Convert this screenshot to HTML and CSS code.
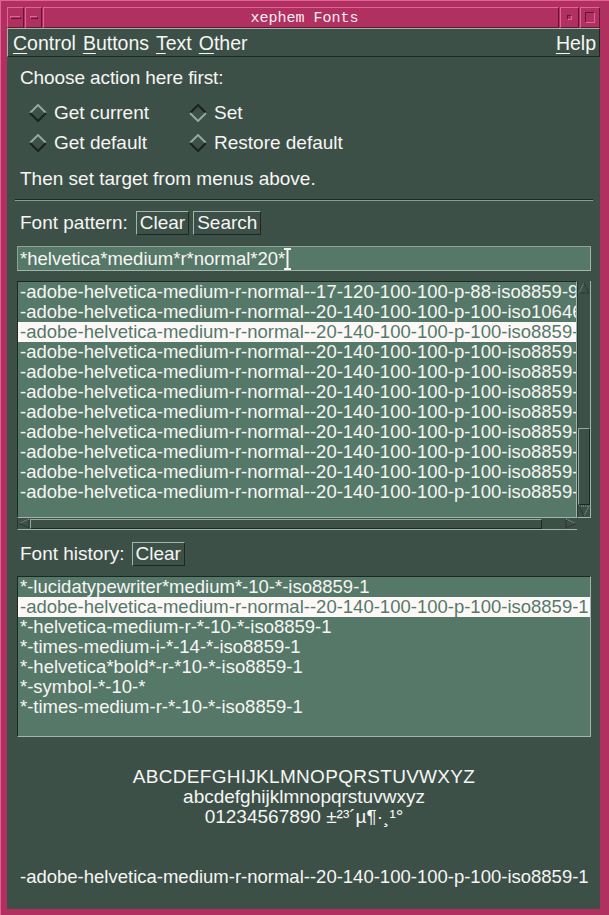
FILE: index.html
```html
<!DOCTYPE html>
<html>
<head>
<meta charset="utf-8">
<title>xephem Fonts</title>
<link rel="stylesheet" href="styles.css">
</head>
<body>
<div class="window">
  <div class="titlebar">
    <div class="tbtn tb1"><span class="bar wide"></span></div>
    <div class="tbtn tb2"><span class="bar narrow"></span></div>
    <div class="title">xephem Fonts</div>
    <div class="tbtn tb3"><span class="sq small"></span></div>
    <div class="tbtn tb4"><span class="sq big"></span></div>
  </div>
  <div class="content">
    <div class="menubar">
      <div class="menu-items">
        <span><u>C</u>ontrol</span>
        <span><u>B</u>uttons</span>
        <span><u>T</u>ext</span>
        <span><u>O</u>ther</span>
      </div>
      <span class="help"><u>H</u>elp</span>
    </div>
    <div class="body">
      <div class="label first">Choose action here first:</div>
      <div class="radios">
        <div class="radio"><svg width="18" height="18" viewBox="0 0 18 18"><path d="M1 9 L9 1 L17 9" class="lt"/><path d="M1 9 L9 17 L17 9" class="dk"/></svg><span>Get current</span></div>
        <div class="radio"><svg width="18" height="18" viewBox="0 0 18 18"><path d="M1 9 L9 1 L17 9" class="dk"/><path d="M1 9 L9 17 L17 9" class="lt"/></svg><span>Set</span></div>
        <div class="radio"><svg width="18" height="18" viewBox="0 0 18 18"><path d="M1 9 L9 1 L17 9" class="lt"/><path d="M1 9 L9 17 L17 9" class="dk"/></svg><span>Get default</span></div>
        <div class="radio"><svg width="18" height="18" viewBox="0 0 18 18"><path d="M1 9 L9 1 L17 9" class="lt"/><path d="M1 9 L9 17 L17 9" class="dk"/></svg><span>Restore default</span></div>
      </div>
      <div class="label then">Then set target from menus above.</div>
      <div class="sep"></div>
      <div class="row pattern-row">
        <span class="row-label">Font pattern:</span>
        <span class="btn">Clear</span>
        <span class="btn">Search</span>
      </div>
      <div class="field">*helvetica*medium*r*normal*20*<svg class="ibeam" width="7" height="22" viewBox="0 0 7 22"><path d="M0 1 H7 M3.5 1 V21 M0 21 H7"/></svg></div>
      <div class="listwrap">
        <div class="list">
          <div class="item">-adobe-helvetica-medium-r-normal--17-120-100-100-p-88-iso8859-9</div>
          <div class="item">-adobe-helvetica-medium-r-normal--20-140-100-100-p-100-iso10646-1</div>
          <div class="item sel">-adobe-helvetica-medium-r-normal--20-140-100-100-p-100-iso8859-1</div>
          <div class="item">-adobe-helvetica-medium-r-normal--20-140-100-100-p-100-iso8859-10</div>
          <div class="item">-adobe-helvetica-medium-r-normal--20-140-100-100-p-100-iso8859-13</div>
          <div class="item">-adobe-helvetica-medium-r-normal--20-140-100-100-p-100-iso8859-14</div>
          <div class="item">-adobe-helvetica-medium-r-normal--20-140-100-100-p-100-iso8859-15</div>
          <div class="item">-adobe-helvetica-medium-r-normal--20-140-100-100-p-100-iso8859-2</div>
          <div class="item">-adobe-helvetica-medium-r-normal--20-140-100-100-p-100-iso8859-3</div>
          <div class="item">-adobe-helvetica-medium-r-normal--20-140-100-100-p-100-iso8859-4</div>
          <div class="item">-adobe-helvetica-medium-r-normal--20-140-100-100-p-100-iso8859-9</div>
        </div>
        <div class="vscroll">
          <svg class="arrow" width="12" height="12" viewBox="0 0 12 12"><path d="M1 11 L6 1" class="alt"/><path d="M6 1 L11 11 L1 11" class="adk"/></svg>
          <div class="vtrack"><div class="vthumb"></div></div>
          <svg class="arrow" width="12" height="12" viewBox="0 0 12 12"><path d="M1 1 L11 1 L6 11" class="alt"/><path d="M6 11 L1 1" class="adk"/></svg>
        </div>
        <div class="hscroll">
          <svg class="harrow" width="12" height="11" viewBox="0 0 12 11"><path d="M11 1 L1 5.5" class="alt"/><path d="M1 5.5 L11 10 L11 1" class="adk"/></svg>
          <div class="hthumb"></div>
          <div class="htrack"></div>
          <svg class="harrow" width="12" height="11" viewBox="0 0 12 11"><path d="M1 1 L11 5.5" class="alt"/><path d="M11 5.5 L1 10 L1 1" class="adk"/></svg>
        </div>
        <div class="corner"></div>
      </div>
      <div class="row history-row">
        <span class="row-label">Font history:</span>
        <span class="btn">Clear</span>
      </div>
      <div class="list history">
        <div class="item">*-lucidatypewriter*medium*-10-*-iso8859-1</div>
        <div class="item sel">-adobe-helvetica-medium-r-normal--20-140-100-100-p-100-iso8859-1</div>
        <div class="item">*-helvetica-medium-r-*-10-*-iso8859-1</div>
        <div class="item">*-times-medium-i-*-14-*-iso8859-1</div>
        <div class="item">*-helvetica*bold*-r-*10-*-iso8859-1</div>
        <div class="item">*-symbol-*-10-*</div>
        <div class="item">*-times-medium-r-*-10-*-iso8859-1</div>
      </div>
      <div class="sample">
        <div class="caps">ABCDEFGHIJKLMNOPQRSTUVWXYZ</div>
        <div>abcdefghijklmnopqrstuvwxyz</div>
        <div>01234567890 ±²³´µ¶·¸¹°</div>
      </div>
      <div class="current">-adobe-helvetica-medium-r-normal--20-140-100-100-p-100-iso8859-1</div>
    </div>
  </div>
</div>
</body>
</html>
```

FILE: styles.css
```css
html, body {
  margin: 0;
  padding: 0;
  background: #b03060;
}
body {
  font-family: "Liberation Sans", Arial, sans-serif;
  color: #f6f6f4;
}
.window {
  width: 609px;
  height: 915px;
  box-sizing: border-box;
  background: #b03060;
  border-top: 1px solid #e8609a;
  border-left: 1px solid #e8609a;
  padding: 6px 9px 6px 6px;
  display: flex;
  flex-direction: column;
}
.titlebar {
  height: 21px;
  display: flex;
  gap: 1px;
}
.tbtn {
  box-sizing: border-box;
  height: 21px;
  border-top: 1px solid #e8609a;
  border-left: 1px solid #e8609a;
  border-bottom: 1px solid #5e1832;
  border-right: 1px solid #5e1832;
  display: flex;
  align-items: center;
  justify-content: center;
}
.tb1 { width: 17px; }
.tb2 { width: 17px; }
.tb3 { width: 19px; }
.tb4 { width: 20px; }
.title {
  flex: 1;
  box-sizing: border-box;
  height: 21px;
  border-top: 1px solid #e8609a;
  border-left: 1px solid #e8609a;
  border-bottom: 1px solid #5e1832;
  border-right: 1px solid #5e1832;
  font-family: "Liberation Mono", "DejaVu Sans Mono", monospace;
  font-size: 15px;
  line-height: 21px;
  text-align: center;
  color: #fbeef3;
  padding-left: 7px;
}
.bar {
  display: block;
  height: 3px;
  box-sizing: border-box;
  border-top: 1px solid #e8609a;
  border-left: 1px solid #e8609a;
  border-bottom: 1px solid #5e1832;
  border-right: 1px solid #5e1832;
}
.bar.wide { width: 11px; }
.bar.narrow { width: 8px; }
.sq {
  display: block;
  box-sizing: border-box;
  border-top: 1px solid #5e1832;
  border-left: 1px solid #5e1832;
  border-bottom: 1px solid #e8609a;
  border-right: 1px solid #e8609a;
}
.sq.small { width: 5px; height: 5px; }
.sq.big { width: 10px; height: 11px; }

.content {
  flex: 1;
  background: #3d5048;
  display: flex;
  flex-direction: column;
}
.menubar {
  height: 29px;
  box-sizing: border-box;
  border-top: 1px solid #a4b4ac;
  border-left: 1px solid #a4b4ac;
  border-bottom: 1px solid #1c2824;
  border-right: 1px solid #1c2824;
  display: flex;
  align-items: center;
  padding: 2px 3px 0 5px;
  font-size: 19.5px;
}
.menu-items {
  display: flex;
  gap: 7px;
}
.help { margin-left: auto; }
u {
  text-decoration: underline;
  text-decoration-thickness: 1px;
  text-underline-offset: 3px;
}
.body {
  padding: 0 9px 0 10px;
  display: flex;
  flex-direction: column;
  font-size: 19px;
}
.label {
  line-height: 22px;
  padding-left: 3px;
}
.label.first { margin-top: 10px; letter-spacing: -0.1px; }
.label.then { margin-top: 10px; }
.radios {
  margin-top: 9px;
  margin-left: 12px;
  display: grid;
  grid-template-columns: 160px 160px;
  grid-auto-rows: 30px;
}
.radio {
  display: flex;
  align-items: center;
  gap: 7px;
}
.radio svg { fill: none; stroke-width: 2; }
.lt { stroke: #93a89e; }
.dk { stroke: #18221e; }
.sep {
  margin: 9px -2px 0 -2px;
  border-top: 1px solid #1c2824;
  border-bottom: 1px solid #8a9e94;
}
.row {
  display: flex;
  align-items: center;
  height: 24px;
  padding-left: 3px;
}
.pattern-row { margin-top: 10px; }
.history-row { margin-top: 12px; }
.row-label { margin-right: 8px; }
.history-row .row-label { margin-right: 7px; }
.btn {
  box-sizing: border-box;
  height: 24px;
  line-height: 22px;
  padding: 0 3px;
  border-top: 1px solid #a4b4ac;
  border-left: 1px solid #a4b4ac;
  border-bottom: 1px solid #1c2824;
  border-right: 1px solid #1c2824;
  margin-right: 4px;
}
.field {
  margin-top: 11px;
  height: 25px;
  box-sizing: border-box;
  background: #567868;
  border-top: 1px solid #8ea296;
  border-left: 1px solid #8ea296;
  border-bottom: 1px solid #a4b4ac;
  border-right: 1px solid #a4b4ac;
  font-size: 18.5px;
  line-height: 23px;
  padding-left: 2px;
  white-space: nowrap;
  display: flex;
  align-items: center;
}
.ibeam { fill: none; stroke: #f4f4f0; stroke-width: 2; margin-left: -1px; }
.listwrap {
  margin-top: 10px;
  display: grid;
  grid-template-columns: 560px 14px;
  grid-template-rows: 237px 12px;
}
.list {
  box-sizing: border-box;
  background: #567868;
  border-top: 1px solid #1c2824;
  border-left: 1px solid #1c2824;
  border-bottom: 1px solid #a4b4ac;
  border-right: 1px solid #a4b4ac;
  overflow: hidden;
  font-size: 18.5px;
  line-height: 20px;
}
.item {
  white-space: nowrap;
  padding-left: 2px;
  height: 20px;
}
.item.sel {
  background: #fcf8f8;
  color: #567868;
}
.vscroll {
  box-sizing: border-box;
  border-right: 1px solid #a4b4ac;
  border-bottom: 1px solid #a4b4ac;
  border-left: 1px solid #2a3832;
  display: flex;
  flex-direction: column;
  align-items: center;
  padding-top: 1px;
}
.vtrack {
  flex: 1;
  width: 12px;
  display: flex;
  flex-direction: column;
  justify-content: flex-end;
}
.vthumb {
  height: 77px;
  box-sizing: border-box;
  border-top: 1px solid #93a89e;
  border-left: 1px solid #93a89e;
  border-bottom: 1px solid #1c2824;
  border-right: 1px solid #1c2824;
}
.arrow, .harrow { fill: none; stroke-width: 1; flex: none; }
.alt { stroke: #93a89e; stroke-dasharray: 1 1; }
.adk { stroke: #18221e; stroke-dasharray: 1 1; }
.hscroll {
  box-sizing: border-box;
  border-bottom: 1px solid #a4b4ac;
  border-left: 1px solid #2a3832;
  display: flex;
  align-items: center;
}
.hthumb {
  width: 512px;
  height: 10px;
  box-sizing: border-box;
  border-top: 1px solid #93a89e;
  border-left: 1px solid #93a89e;
  border-bottom: 1px solid #1c2824;
  border-right: 1px solid #1c2824;
}
.htrack { flex: 1; }
.list.history {
  margin-top: 10px;
  height: 161px;
}
.sample {
  margin-top: 30px;
  text-align: center;
  line-height: 20px;
  font-size: 19px;
}
.sample .caps { letter-spacing: 0.3px; }
.current {
  margin-top: 40px;
  padding-left: 3px;
  font-size: 18.5px;
  line-height: 20px;
  white-space: nowrap;
}
```
